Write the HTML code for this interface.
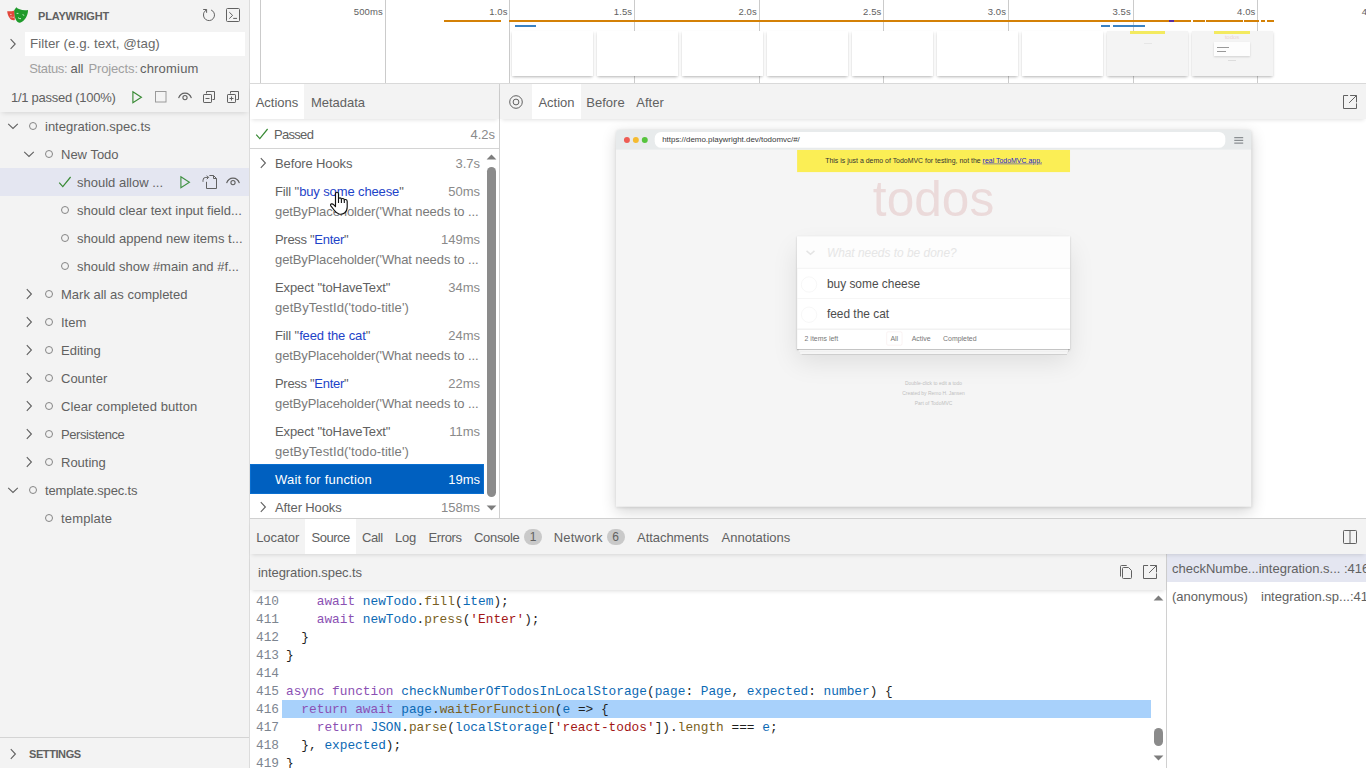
<!DOCTYPE html>
<html lang="en">
<head>
<meta charset="utf-8">
<title>Playwright Test</title>
<style>
*{box-sizing:border-box;margin:0;padding:0}
html,body{width:1366px;height:768px;overflow:hidden;background:#fff}
body{font-family:"Liberation Sans",sans-serif;font-size:13px;color:#616161;position:relative;-webkit-font-smoothing:antialiased}
.abs{position:absolute}
svg{display:block;overflow:visible}
.ic{position:absolute;width:16px;height:16px;fill:none;stroke:#616161;stroke-width:1;stroke-linecap:butt;stroke-linejoin:miter}
/* ---------- sidebar ---------- */
#side{left:0;top:0;width:250px;height:768px;background:#f3f3f3;border-right:1px solid #dcdcdc}
#side .title{left:38px;top:9px;font-size:11px;font-weight:700;color:#616161;letter-spacing:-.2px;line-height:14px}
#filter{left:25px;top:32px;width:220px;height:24px;background:#fff}
#filter span{position:absolute;left:5px;top:3px;font-size:13.33px;line-height:17px;color:#6a6a6a;letter-spacing:.03px}
#status{left:29.2px;top:61px;line-height:16px;color:#a0a0a0;white-space:nowrap}
#status b{font-weight:400;color:#616161}
#status span,#status b{position:absolute;top:0}
#tb{left:0;top:84px;width:249px;height:28px;box-shadow:0 3px 5px -2px rgba(0,0,0,.13)}
#tb .t{left:11px;top:6px;line-height:16px;color:#616161;white-space:nowrap;letter-spacing:-.27px}
.row{position:absolute;left:0;width:249px;height:28px;line-height:28px;white-space:nowrap;color:#616161}
.row.sel{background:#e4e6f1}
.row span{position:absolute;top:1px}
.dot{position:absolute;width:8.4px;height:8.4px;border:1.4px solid #858585;border-radius:50%;top:9.8px;margin-left:-.2px}
#settings{left:0;top:737px;width:249px;height:31px;border-top:1px solid #d4d4d4}
#settings span{position:absolute;left:29px;top:9px;font-size:11px;font-weight:700;line-height:14px;letter-spacing:-.41px}
/* ---------- timeline ---------- */
#tl{left:250px;top:0;width:1116px;height:84px;background:#fff;border-bottom:1px solid #d9d9d9;overflow:hidden}
.grid{position:absolute;top:0;width:1px;height:83px;background:#cbcbcb}
.tlab{position:absolute;top:5px;font-size:9.5px;letter-spacing:.1px;line-height:13px;color:#616161;white-space:nowrap;text-align:right;width:60px}
.bar{position:absolute;height:2px}
.film{position:absolute;top:31px;width:81px;height:45px;background:#fff;box-shadow:0 2px 3px -1px rgba(0,0,0,.2),1px 1px 2px rgba(0,0,0,.06),-1px 1px 2px rgba(0,0,0,.06);overflow:hidden}
.film.g{background:#f4f4f4}
/* ---------- tab bars ---------- */
.tabbar{position:absolute;z-index:5;background:#f3f3f3;height:35px;box-shadow:0 3px 4px -2px rgba(0,0,0,.12)}
.tab{position:absolute;top:0;height:35px;line-height:38px;white-space:nowrap;color:#616161;text-align:center}
.tab.on{background:#fff}
.badge{position:absolute;top:10px;height:16px;line-height:16px;width:18px;border-radius:8px;background:#c9c9c9;color:#616161;font-size:12px;text-align:center}
.tl{position:absolute;top:0;line-height:38px;white-space:nowrap;color:#616161}
/* ---------- actions ---------- */
#acts{left:250px;top:120px;width:249px;height:398px;background:#fff;overflow:hidden}
#vdiv{left:499px;top:84px;width:1px;height:434px;background:#d0d0d0}
.a{position:absolute;left:0;width:234px;white-space:nowrap;color:#616161}
.a .n{position:absolute;left:25px;line-height:20px;letter-spacing:-.12px}
.a .n i{font-style:normal;color:#1d43c8}
.a .s{position:absolute;left:25px;line-height:20px;color:#7a7a7a;letter-spacing:-.1px}
.a.sel{background:#0060c0;color:#fff}
.a.sel .n,.a.sel .d{color:#fff}
.a .d{position:absolute;right:4px;line-height:20px;color:#8a8a8a}
/* ---------- snapshot ---------- */
#snap{left:500px;top:120px;width:866px;height:398px;background:#fff;overflow:hidden}

/* browser frame (authored at 1280 wide, scaled) */
#bf{position:absolute;left:115.5px;top:10.2px;width:1280px;height:760px;transform:scale(.4962,.4953);transform-origin:0 0;box-shadow:0 10px 30px 0 rgba(0,0,0,.16),0 2px 6px rgba(0,0,0,.1);border-radius:7px 7px 0 0;background:#f5f5f5;font-family:"Liberation Sans",sans-serif}
#bfh{position:absolute;left:0;top:0;width:1280px;height:40px;background:#e8ebec;border-radius:7px 7px 0 0}
#bfh i{position:absolute;top:14px;width:12px;height:12px;border-radius:50%}
#addr{position:absolute;left:78px;top:4px;width:1150px;height:32px;border-radius:13px;background:#fff;color:#3a3a3a;font-size:16px;line-height:32px;padding-left:15px;white-space:nowrap}
#pg{position:absolute;left:0;top:40px;width:1280px;height:720px;background:#f5f5f5;overflow:hidden;color:#4d4d4d;font-size:14px}
#ban{position:absolute;left:365px;top:0;width:550px;height:45px;background:#fbee55;color:#333;text-align:center;line-height:45px;font-size:14px;white-space:nowrap}
#ban u{color:#1a1ad2}
#h1{position:absolute;left:365px;top:28px;width:550px;text-align:center;font-size:100px;line-height:140px;color:rgba(175,47,47,.135)}
#app{position:absolute;left:365px;top:175px;width:550px;height:228px;background:#fff;box-shadow:0 2px 4px 0 rgba(0,0,0,.2),0 25px 50px 0 rgba(0,0,0,.1)}
#nt{position:absolute;left:0;top:0;width:550px;height:65px;background:#fdfdfd;box-shadow:inset 0 -2px 1px rgba(0,0,0,.03);font-size:24px;font-style:italic;color:#e6e6e6;line-height:65px;padding-left:60px;white-space:nowrap}
.li{position:absolute;left:0;width:550px;height:61px;border-bottom:1px solid #ededed;font-size:24px;line-height:60px;padding-left:60px;color:#4d4d4d;white-space:nowrap}
.li:before{content:"";position:absolute;left:8px;top:16px;width:30px;height:30px;border:1px solid #efefef;border-radius:50%}
#ft{position:absolute;left:0;top:187px;width:550px;height:41px;border-top:1px solid #e6e6e6;color:#777;font-size:14px;line-height:20px;box-shadow:0 1px 1px rgba(0,0,0,.2),0 8px 0 -3px #f6f6f6,0 9px 1px -3px rgba(0,0,0,.2),0 16px 0 -6px #f6f6f6,0 17px 2px -6px rgba(0,0,0,.2)}
#ft span{position:absolute;top:8px;white-space:nowrap}
#info{position:absolute;left:365px;top:462px;width:550px;text-align:center;color:#bfbfbf;font-size:10px;line-height:10px}
#info p{margin:5px 0 10px}
#hdiv{left:250px;top:518px;width:1116px;height:1px;background:#d0d0d0}
/* ---------- source ---------- */
#srchead{z-index:4;left:250px;top:554px;width:916px;height:36px;background:#f3f3f3;box-shadow:0 3px 4px -2px rgba(0,0,0,.14)}
#code{left:250px;top:590px;width:916px;height:178px;background:#fff;overflow:hidden;font-family:"Liberation Mono",monospace;font-size:12.8px}
.ln{position:absolute;left:0;width:916px;height:18px;line-height:18px;white-space:pre;color:#1f1f1f}
.ln .no{position:absolute;left:6px;color:#7d8590}
.ln .tx{position:absolute;left:36px}
.k{color:#8b50b3}.v{color:#0b69b4}.p{color:#7a5f22}.st{color:#a31515}
.sk{position:absolute;line-height:20px;white-space:nowrap;color:#616161}
#stack{overflow:hidden;left:1166px;top:554px;width:200px;height:214px;background:#fff;border-left:1px solid #d0d0d0}
</style>
</head>
<body>
<div id="side" class="abs">
<svg class="abs" style="left:7px;top:6px" width="22" height="18" viewBox="0 0 22 18">
<path d="M.2 5.2 C2.5 5.6 5 5.3 7.6 4.4 L7.8 14 C4.6 15.2 .8 11.6 .2 5.2Z" fill="#e2473b"/>
<path d="M7.2 4.2 L9.3 1.3 C11.2 3.4 15.4 4.7 21 4 C21.2 9.2 17.6 15.6 13 16.7 C9.8 16.9 7.3 12.8 7.2 4.2Z" fill="#1f9a2b"/>
<path d="M9.6 7.4 h1.8 M15.6 8.6 l1.6 .8 M11 11.6 l1.2 .9 l1.8 .2" stroke="#c9efc9" stroke-width="1" fill="none"/>
<path d="M3.2 8.4 h1.3 M3.6 11 h1 M5.6 11.3 h1.2" stroke="#f9d2cd" stroke-width="1" fill="none"/>
</svg>
<div class="abs title">PLAYWRIGHT</div>
<svg class="ic" style="left:201px;top:7px" viewBox="0 0 16 16"><path d="M5.4 2.7 L3.2 5.2 Q2.5 6.2 2.6 7 A5.5 5.5 0 1 0 10.1 3 M2.2 2.5 H5.6 V5.8"/></svg>
<svg class="ic" style="left:225px;top:7px" viewBox="0 0 16 16"><rect x="1.5" y="1.5" width="13" height="13" rx="1"/><path d="M4.3 5.2 L7.6 8.4 L4.3 11.6 M8.2 11.4 H12"/></svg>
<svg class="ic" style="left:5px;top:36px" viewBox="0 0 16 16"><path d="M5.6 3.2 L10.2 8 L5.6 12.8" stroke-width="1.1"/></svg>
<div id="filter" class="abs"><span>Filter (e.g. text, @tag)</span></div>
<div id="status" class="abs"><span style="left:0;letter-spacing:-.34px">Status:</span><b style="left:41.3px">all</b><span style="left:59.2px;letter-spacing:-.12px">Projects:</span><b style="left:110.8px;letter-spacing:.19px">chromium</b></div>
<div id="tb" class="abs">
<div class="abs t">1/1 passed (100%)</div>
<svg class="ic" style="left:129px;top:5px;stroke:#388a34" viewBox="0 0 16 16"><path d="M3.9 2.8 L12.4 8.3 L3.9 13.8 Z" stroke-width="1.15"/></svg>
<svg class="ic" style="left:153px;top:5px;stroke:#9a9a9a" viewBox="0 0 16 16"><rect x="2.5" y="2.5" width="10.5" height="10.5"/></svg>
<svg class="ic" style="left:177px;top:5px" viewBox="0 0 16 16"><path d="M1.6 9.2 C2.8 5.4 5.4 4.1 8 4.1 C10.6 4.1 13.2 5.4 14.4 9.2" stroke-width="1.15"/><circle cx="8" cy="8.6" r="2.1" stroke-width="1.1"/></svg>
<svg class="ic" style="left:201px;top:5px" viewBox="0 0 16 16"><path d="M5.5 4.5 V2.5 H13.5 V10.5 H11.5"/><rect x="2.5" y="5.5" width="8" height="8" rx=".6"/><path d="M4.5 9.5 H8.5"/></svg>
<svg class="ic" style="left:225px;top:5px" viewBox="0 0 16 16"><path d="M5.5 4.5 V2.5 H13.5 V10.5 H11.5"/><rect x="2.5" y="5.5" width="8" height="8" rx=".6"/><path d="M4.5 9.5 H8.5 M6.5 7.5 V11.5"/></svg>
</div>
<div class="row" style="top:112px"><svg class="ic" style="left:5px;top:6px" viewBox="0 0 16 16"><path d="M3.2 5.8 L8 10.4 L12.8 5.8" stroke-width="1.1"/></svg><i class="dot" style="left:29px"></i><span style="left:45px">integration.spec.ts</span></div>
<div class="row" style="top:140px"><svg class="ic" style="left:21px;top:6px" viewBox="0 0 16 16"><path d="M3.2 5.8 L8 10.4 L12.8 5.8" stroke-width="1.1"/></svg><i class="dot" style="left:45px"></i><span style="left:61px">New Todo</span></div>
<div class="row sel" style="top:168px"><svg class="ic" style="left:57px;top:6px;stroke:#388a34" viewBox="0 0 16 16"><path d="M2.2 8.6 L5.8 12.6 L13.6 3" stroke-width="1.2"/></svg><span style="left:77px">should allow ...</span><svg class="ic" style="left:177px;top:6px;stroke:#3f9142" viewBox="0 0 16 16"><path d="M3.9 2.8 L12.4 8.3 L3.9 13.8 Z" stroke-width="1.15"/></svg><svg class="ic" style="left:201px;top:6px" viewBox="0 0 16 16"><path d="M8.4 1.5 H12.5 L15.5 4.5 V14.5 H5.5 V7.8 M12.5 1.5 V4.5 H15.5 M2 7.8 V6.2 Q2 3.4 4.8 3.4 H7.4 M5.8 1.6 L7.6 3.4 L5.8 5.2"/></svg><svg class="ic" style="left:225px;top:6px" viewBox="0 0 16 16"><path d="M1.6 9.2 C2.8 5.4 5.4 4.1 8 4.1 C10.6 4.1 13.2 5.4 14.4 9.2" stroke-width="1.15"/><circle cx="8" cy="8.6" r="2.1" stroke-width="1.1"/></svg></div>
<div class="row" style="top:196px"><i class="dot" style="left:61px"></i><span style="left:77px">should clear text input field...</span></div>
<div class="row" style="top:224px"><i class="dot" style="left:61px"></i><span style="left:77px">should append new items t...</span></div>
<div class="row" style="top:252px"><i class="dot" style="left:61px"></i><span style="left:77px">should show #main and #f...</span></div>
<div class="row" style="top:280px"><svg class="ic" style="left:21px;top:6px" viewBox="0 0 16 16"><path d="M5.8 3.2 L10.4 8 L5.8 12.8" stroke-width="1.1"/></svg><i class="dot" style="left:45px"></i><span style="left:61px">Mark all as completed</span></div>
<div class="row" style="top:308px"><svg class="ic" style="left:21px;top:6px" viewBox="0 0 16 16"><path d="M5.8 3.2 L10.4 8 L5.8 12.8" stroke-width="1.1"/></svg><i class="dot" style="left:45px"></i><span style="left:61px">Item</span></div>
<div class="row" style="top:336px"><svg class="ic" style="left:21px;top:6px" viewBox="0 0 16 16"><path d="M5.8 3.2 L10.4 8 L5.8 12.8" stroke-width="1.1"/></svg><i class="dot" style="left:45px"></i><span style="left:61px">Editing</span></div>
<div class="row" style="top:364px"><svg class="ic" style="left:21px;top:6px" viewBox="0 0 16 16"><path d="M5.8 3.2 L10.4 8 L5.8 12.8" stroke-width="1.1"/></svg><i class="dot" style="left:45px"></i><span style="left:61px">Counter</span></div>
<div class="row" style="top:392px"><svg class="ic" style="left:21px;top:6px" viewBox="0 0 16 16"><path d="M5.8 3.2 L10.4 8 L5.8 12.8" stroke-width="1.1"/></svg><i class="dot" style="left:45px"></i><span style="left:61px;letter-spacing:0.09px">Clear completed button</span></div>
<div class="row" style="top:420px"><svg class="ic" style="left:21px;top:6px" viewBox="0 0 16 16"><path d="M5.8 3.2 L10.4 8 L5.8 12.8" stroke-width="1.1"/></svg><i class="dot" style="left:45px"></i><span style="left:61px;letter-spacing:-0.41px">Persistence</span></div>
<div class="row" style="top:448px"><svg class="ic" style="left:21px;top:6px" viewBox="0 0 16 16"><path d="M5.8 3.2 L10.4 8 L5.8 12.8" stroke-width="1.1"/></svg><i class="dot" style="left:45px"></i><span style="left:61px">Routing</span></div>
<div class="row" style="top:476px"><svg class="ic" style="left:5px;top:6px" viewBox="0 0 16 16"><path d="M3.2 5.8 L8 10.4 L12.8 5.8" stroke-width="1.1"/></svg><i class="dot" style="left:29px"></i><span style="left:45px;letter-spacing:-0.14px">template.spec.ts</span></div>
<div class="row" style="top:504px"><i class="dot" style="left:45px"></i><span style="left:61px;letter-spacing:0.16px">template</span></div>
<div id="settings" class="abs"><svg class="ic" style="left:5px;top:8px" viewBox="0 0 16 16"><path d="M5.8 3.2 L10.4 8 L5.8 12.8" stroke-width="1.1"/></svg><span>SETTINGS</span></div>
</div>
<div id="tl" class="abs">
<i class="grid" style="left:10.0px"></i>
<i class="grid" style="left:134.6px"></i><span class="tlab" style="left:72.8px">500ms</span>
<i class="grid" style="left:259.3px"></i><span class="tlab" style="left:197.5px">1.0s</span>
<i class="grid" style="left:384.0px"></i><span class="tlab" style="left:322.2px">1.5s</span>
<i class="grid" style="left:508.6px"></i><span class="tlab" style="left:446.8px">2.0s</span>
<i class="grid" style="left:633.2px"></i><span class="tlab" style="left:571.4px">2.5s</span>
<i class="grid" style="left:757.9px"></i><span class="tlab" style="left:696.1px">3.0s</span>
<i class="grid" style="left:882.6px"></i><span class="tlab" style="left:820.8px">3.5s</span>
<i class="grid" style="left:1007.2px"></i><span class="tlab" style="left:945.4px">4.0s</span>
<i class="grid" style="left:1131.9px"></i><span class="tlab" style="left:1070.1px">4.5s</span>
<div class="film" style="left:262px"></div>
<div class="film" style="left:347px"></div>
<div class="film" style="left:432px"></div>
<div class="film" style="left:517px"></div>
<div class="film" style="left:602px"></div>
<div class="film" style="left:687px"></div>
<div class="film" style="left:772px"></div>
<div class="film g" style="left:857px"><i style="position:absolute;left:23px;top:0;width:35px;height:3px;background:#f3ea5f"></i><i style="position:absolute;left:37px;top:12px;width:8px;height:1px;background:#e6e6e6"></i></div>
<div class="film g" style="left:942px"><i style="position:absolute;left:22px;top:0;width:36px;height:3px;background:#f3ea5f"></i><span style="position:absolute;left:22px;top:3px;width:36px;text-align:center;font-size:6px;line-height:7px;color:#ead4d4">todos</span><i style="position:absolute;left:22px;top:11px;width:36px;height:14px;background:#fdfdfd;box-shadow:0 1px 2px rgba(0,0,0,.15)"></i><i style="position:absolute;left:25px;top:16px;width:12px;height:1px;background:#999"></i><i style="position:absolute;left:25px;top:20px;width:9px;height:1px;background:#999"></i><i style="position:absolute;left:36px;top:29px;width:8px;height:1px;background:#ddd"></i></div>
<i class="bar" style="left:194.0px;width:57.0px;top:20px;background:#d48106"></i><i class="bar" style="left:259.0px;width:682.0px;top:20px;background:#d48106"></i><i class="bar" style="left:942.5px;width:12.5px;top:20px;background:#d48106"></i><i class="bar" style="left:956.0px;width:36.7px;top:20px;background:#d48106"></i><i class="bar" style="left:994.0px;width:14.7px;top:20px;background:#d48106"></i><i class="bar" style="left:1010.5px;width:4.5px;top:20px;background:#d48106"></i><i class="bar" style="left:1016.5px;width:7.5px;top:20px;background:#d48106"></i><i class="bar" style="left:919.0px;width:5.0px;top:20px;background:#5a2ca0"></i><i class="bar" style="left:265.0px;width:21.0px;top:25px;background:#3a82c4"></i><i class="bar" style="left:851.0px;width:9.0px;top:25px;background:#3a82c4"></i><i class="bar" style="left:863.0px;width:32.0px;top:25px;background:#3a82c4"></i>
</div>
<div class="tabbar" style="left:250px;top:84px;width:249px">
<div class="tab on" style="left:0;width:54px">Actions</div><div class="tab" style="left:54px;width:68px">Metadata</div>
</div>
<div class="tabbar" style="left:500px;top:84px;width:866px">
<svg class="ic" style="left:8px;top:10px" viewBox="0 0 16 16"><circle cx="8" cy="8" r="6.3"/><circle cx="8" cy="8" r="2.9"/></svg>
<div class="tab on" style="left:32px;width:49px">Action</div><div class="tab" style="left:81px;width:49px">Before</div><div class="tab" style="left:130px;width:40px">After</div>
<svg class="ic" style="left:842px;top:10px" viewBox="0 0 16 16"><path d="M6.1 1.5 H1.5 V14.5 H14.5 V9.4 M8.1 1.5 H14.5 V8.3 M14.5 1.5 L7.1 8.9"/></svg>
</div>
<div id="vdiv" class="abs"></div>
<div id="acts" class="abs">
<div class="abs" style="left:0;top:0;width:249px;height:29px;border-bottom:1px solid #d4d4d4">
<svg class="ic" style="left:4px;top:6px;stroke:#388a34" viewBox="0 0 16 16"><path d="M2.2 8.6 L5.8 12.6 L13.6 3" stroke-width="1.2"/></svg>
<span class="abs" style="left:24px;top:5px;line-height:20px;color:#616161;letter-spacing:-.7px">Passed</span>
<span class="abs" style="right:4px;top:5px;line-height:20px;color:#8a8a8a">4.2s</span></div>
<div class="a" style="top:29px;height:28px"><svg class="ic" style="left:5px;top:6px" viewBox="0 0 16 16"><path d="M5.8 3.2 L10.4 8 L5.8 12.8" stroke-width="1.1"/></svg><span class="n" style="top:5px">Before Hooks</span><span class="d" style="top:5px">3.7s</span></div>
<div class="a" style="top:57px;height:48px"><span class="n" style="top:5px">Fill "<i>buy some cheese</i>"</span><span class="d" style="top:5px">50ms</span><span class="s" style="top:25px">getByPlaceholder('What needs to ...</span></div>
<div class="a" style="top:105px;height:48px"><span class="n" style="top:5px;letter-spacing:-.3px">Press "<i>Enter</i>"</span><span class="d" style="top:5px">149ms</span><span class="s" style="top:25px">getByPlaceholder('What needs to ...</span></div>
<div class="a" style="top:153px;height:48px"><span class="n" style="top:5px">Expect "toHaveText"</span><span class="d" style="top:5px">34ms</span><span class="s" style="top:25px;letter-spacing:.1px">getByTestId('todo-title')</span></div>
<div class="a" style="top:201px;height:48px"><span class="n" style="top:5px">Fill "<i>feed the cat</i>"</span><span class="d" style="top:5px">24ms</span><span class="s" style="top:25px">getByPlaceholder('What needs to ...</span></div>
<div class="a" style="top:249px;height:48px"><span class="n" style="top:5px;letter-spacing:-.3px">Press "<i>Enter</i>"</span><span class="d" style="top:5px">22ms</span><span class="s" style="top:25px">getByPlaceholder('What needs to ...</span></div>
<div class="a" style="top:297px;height:48px"><span class="n" style="top:5px">Expect "toHaveText"</span><span class="d" style="top:5px">11ms</span><span class="s" style="top:25px;letter-spacing:.1px">getByTestId('todo-title')</span></div>
<div class="a sel" style="top:344px;height:30px;z-index:2;box-shadow:inset 0 0 0 1px #0a6fd0"><span class="n" style="top:6px;letter-spacing:.2px">Wait for function</span><span class="d" style="top:6px">19ms</span></div>
<div class="a" style="top:373px;height:28px"><svg class="ic" style="left:5px;top:6px" viewBox="0 0 16 16"><path d="M5.8 3.2 L10.4 8 L5.8 12.8" stroke-width="1.1"/></svg><span class="n" style="top:5px">After Hooks</span><span class="d" style="top:5px">158ms</span></div>
<svg class="abs" style="left:236px;top:34px" width="11" height="6" viewBox="0 0 11 6"><path d="M0.6 5.6 L5.5 .6 L10.4 5.6Z" fill="#7d7d7d"/></svg>
<div class="abs" style="left:237px;top:47px;width:9px;height:330px;border-radius:4.5px;background:#8b8b8b"></div>
<svg class="abs" style="left:236px;top:385px" width="11" height="6" viewBox="0 0 11 6"><path d="M0.6 .4 L5.5 5.4 L10.4 .4Z" fill="#7d7d7d"/></svg>
</div>

<div id="snap" class="abs">
<div id="bf">
<div id="bfh"><i style="left:16px;background:#ee5c54"></i><i style="left:34px;background:#f5bb30"></i><i style="left:52px;background:#56c43e"></i>
<div id="addr">https://demo.playwright.dev/todomvc/#/</div>
<svg style="position:absolute;left:1246px;top:14px" width="18" height="14" viewBox="0 0 18 14"><path d="M0 1.5 H18 M0 7 H18 M0 12.5 H18" stroke="#8a8f92" stroke-width="2.4" fill="none"/></svg>
</div>
<div id="pg">
<div id="ban">This is just a demo of TodoMVC for testing, not the <u>real TodoMVC app.</u></div>
<div id="h1">todos</div>
<div id="app">
<div id="nt"><svg style="position:absolute;left:16px;top:26px" width="24" height="14" viewBox="0 0 24 14"><path d="M3 3 L11 10 L19 3" stroke="#e4e4e4" stroke-width="3" fill="none"/></svg>What needs to be done?</div>
<div class="li" style="top:65px">buy some cheese</div>
<div class="li" style="top:126px">feed the cat</div>
<div id="ft"><span style="left:15px">2 items left</span><span style="left:180px;top:4px;padding:3px 7px;border:1px solid rgba(175,47,47,.12);border-radius:3px">All</span><span style="left:231px">Active</span><span style="left:294px">Completed</span></div>
</div>
<div id="info"><p>Double-click to edit a todo</p><p>Created by Remo H. Jansen</p><p>Part of TodoMVC</p></div>
</div>
</div>
</div>
<div id="hdiv" class="abs"></div>

<div class="tabbar" style="left:250px;top:519px;width:1116px">
<i class="abs" style="left:55px;top:0;width:51px;height:35px;background:#fff"></i>
<span class="tl" style="left:6.2px;letter-spacing:-0.05px">Locator</span><span class="tl" style="left:61.5px;letter-spacing:-0.50px">Source</span><span class="tl" style="left:112.0px;letter-spacing:-0.40px">Call</span><span class="tl" style="left:145.0px;letter-spacing:-0.23px">Log</span><span class="tl" style="left:178.4px;letter-spacing:-0.36px">Errors</span><span class="tl" style="left:224.0px;letter-spacing:-0.31px">Console</span><span class="tl" style="left:303.8px;letter-spacing:0.16px">Network</span><span class="tl" style="left:387.0px;letter-spacing:-0.04px">Attachments</span><span class="tl" style="left:471.5px;letter-spacing:0.02px">Annotations</span><span class="badge" style="left:274px">1</span><span class="badge" style="left:356.5px">6</span>
<svg class="ic" style="left:1091px;top:10px" viewBox="0 0 16 16"><rect x="2.5" y="1.5" width="13" height="13" rx=".8"/><path d="M9 1.5 V14.5"/></svg>
</div>
<div id="srchead" class="abs"><span class="abs" style="left:8px;top:11px;line-height:16px;color:#616161;letter-spacing:-.08px">integration.spec.ts</span>
<svg class="ic" style="left:868px;top:10px" viewBox="0 0 16 16"><path d="M8.7 1.5 H3.5 Q2.5 1.5 2.5 2.5 V12.5 M5.5 3.5 H10.5 L13.5 6.5 V13.5 Q13.5 14.5 12.5 14.5 H5.5 Q4.5 14.5 4.5 13.5 V4.5 Q4.5 3.5 5.5 3.5Z"/></svg>
<svg class="ic" style="left:892px;top:10px" viewBox="0 0 16 16"><path d="M6.1 1.5 H1.5 V14.5 H14.5 V9.4 M8.1 1.5 H14.5 V8.3 M14.5 1.5 L7.1 8.9"/></svg>
</div>
<div id="code" class="abs">
<i class="abs" style="left:32px;top:110px;width:869px;height:18px;background:#a8d1fb"></i>
<div class="ln" style="top:3px"><span class="no">410</span><span class="tx">    <span class="k">await</span> <span class="v">newTodo</span>.<span class="p">fill</span>(<span class="v">item</span>);</span></div>
<div class="ln" style="top:21px"><span class="no">411</span><span class="tx">    <span class="k">await</span> <span class="v">newTodo</span>.<span class="p">press</span>(<span class="st">'Enter'</span>);</span></div>
<div class="ln" style="top:39px"><span class="no">412</span><span class="tx">  }</span></div>
<div class="ln" style="top:57px"><span class="no">413</span><span class="tx">}</span></div>
<div class="ln" style="top:75px"><span class="no">414</span><span class="tx"></span></div>
<div class="ln" style="top:93px"><span class="no">415</span><span class="tx"><span class="k">async</span> <span class="k">function</span> <span class="v">checkNumberOfTodosInLocalStorage</span>(<span class="v">page</span>: <span class="v">Page</span>, <span class="v">expected</span>: <span class="v">number</span>) {</span></div>
<div class="ln" style="top:111px"><span class="no">416</span><span class="tx">  <span class="k">return</span> <span class="k">await</span> <span class="v">page</span>.<span class="p">waitForFunction</span>(<span class="v">e</span> =&gt; {</span></div>
<div class="ln" style="top:129px"><span class="no">417</span><span class="tx">    <span class="k">return</span> <span class="v">JSON</span>.<span class="p">parse</span>(<span class="v">localStorage</span>[<span class="st">'react-todos'</span>]).<span class="p">length</span> === <span class="v">e</span>;</span></div>
<div class="ln" style="top:147px"><span class="no">418</span><span class="tx">  }, <span class="v">expected</span>);</span></div>
<div class="ln" style="top:165px"><span class="no">419</span><span class="tx">}</span></div>
<svg class="abs" style="left:903px;top:5px" width="11" height="6" viewBox="0 0 11 6"><path d="M0.6 5.6 L5.5 .6 L10.4 5.6Z" fill="#7d7d7d"/></svg>
<div class="abs" style="left:904px;top:138px;width:9px;height:18px;border-radius:4.5px;background:#8b8b8b"></div>
<svg class="abs" style="left:903px;top:165px" width="11" height="6" viewBox="0 0 11 6"><path d="M0.6 .4 L5.5 5.4 L10.4 .4Z" fill="#7d7d7d"/></svg>
</div>

<div id="stack" class="abs">
<div class="abs" style="left:0;top:0;width:199px;height:28px;background:#e4e6f1"></div>
<span class="sk" style="left:5px;top:5px">checkNumbe...integration.s... :416</span>
<span class="sk" style="left:5px;top:33px">(anonymous)</span><span class="sk" style="left:94px;top:33px">integration.sp...:416</span>
</div>
<svg class="abs" style="left:329px;top:191px;z-index:20" width="20" height="25" viewBox="0 0 20 25"><path d="M6.5 13.5 V3 Q6.5 1.2 8 1.2 Q9.5 1.2 9.5 3 V8 Q9.6 6.8 11 6.8 Q12.3 6.8 12.4 8.2 Q12.7 7.4 13.9 7.5 Q15.2 7.6 15.3 9 Q15.7 8.3 16.8 8.5 Q18.2 8.8 18.2 10.5 V16 Q18.2 20 15.5 22 Q13 23.8 10 23 Q7.5 22.3 5.5 19.5 L1.8 14.8 Q1 13.4 2.4 12.9 Q3.6 12.6 4.6 13.6 L6.5 15.6 Z" fill="#fff" stroke="#111" stroke-width="1.15" stroke-linejoin="round"/><path d="M9.5 8 V12 M12.4 8.2 V12 M15.3 9 V12" stroke="#111" stroke-width="1.1" fill="none"/></svg>
</body>
</html>
